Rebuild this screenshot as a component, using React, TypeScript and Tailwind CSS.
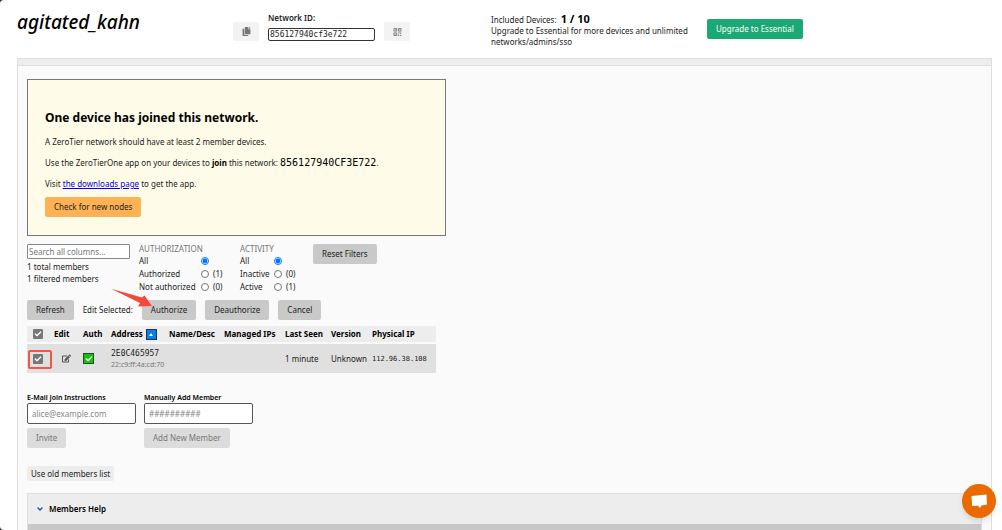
import type { ReactNode } from "react";
import { FaCopy, FaEdit } from "react-icons/fa";
import { Check, ChevronDown } from "lucide-react";

type ActionButtonProps = {
  children: ReactNode;
  className?: string;
  disabled?: boolean;
};

const ActionButton = ({
  children,
  className = "bg-[#c9c9c9] text-[#222]",
  disabled,
}: ActionButtonProps) => (
  <button
    type="button"
    disabled={disabled}
    className={`h-5 shrink-0 whitespace-nowrap rounded-xs px-[9px] ${className}`}
  >
    {children}
  </button>
);

const QrIcon = () => (
  <svg viewBox="0 0 9 9" className="h-2 w-[9px]" fill="none" stroke="#777">
    <path d="M.5.5h3v3h-3zM5.5.5h3v3h-3zM.5 5.5h3v3h-3zM5 5.5h2M8 5v2M5.5 7v2M7 8.5h2M1.500 2h1M6.500 2h1M1.500 7h1" />
  </svg>
);

type FilterOption = { label: string; count?: number };

const FilterGroup = ({
  title,
  name,
  options,
  columns,
}: {
  title: string;
  name: string;
  options: FilterOption[];
  columns: string;
}) => (
  <fieldset>
    <legend className="h-[10px] leading-[10px] text-[#777]">{title}</legend>
    {options.map((option, i) => (
      <label
        key={option.label}
        className={`grid h-[13px] items-center whitespace-nowrap leading-[10px] ${columns}`}
      >
        <span>{option.label}</span>
        <input
          type="radio"
          name={name}
          defaultChecked={i === 0}
          className="h-2 w-2 accent-[#0075ff]"
        />
        {option.count !== undefined && <span>({option.count})</span>}
      </label>
    ))}
  </fieldset>
);

const Checkbox = ({ label }: { label: string }) => (
  <span className="relative block h-[10px] w-[10px]">
    <input
      type="checkbox"
      aria-label={label}
      defaultChecked
      className="block h-[10px] w-[10px] appearance-none rounded-[1px] bg-[#777]"
    />
    <Check
      className="pointer-events-none absolute inset-0 h-[10px] w-[10px] p-px text-white"
      strokeWidth={4}
    />
  </span>
);

const Header = () => (
  <header className="flex h-[58px] items-start pl-[17px]">
    <h1 className="w-[216px] shrink-0 pt-2 text-[19px] font-medium italic leading-7 text-black">
      agitated_kahn
    </h1>
    <div className="flex shrink-0 items-end gap-[9px] pt-3">
      <button
        type="button"
        aria-label="Copy network ID"
        className="flex h-[19px] w-[26px] items-center justify-center rounded-xs bg-[#f3f3f3] text-[#777]"
      >
        <FaCopy size={9} />
      </button>
      <div>
        <label
          htmlFor="network-id"
          className="block h-4 font-semibold leading-3"
        >
          Network ID:
        </label>
        <input
          id="network-id"
          readOnly
          defaultValue="856127940cf3e722"
          className="block h-[13px] w-[107px] rounded-xs border border-[#333] bg-white px-px font-['DejaVu_Sans_Mono',monospace] text-[8px]"
        />
      </div>
      <button
        type="button"
        aria-label="Show QR code"
        className="flex h-[19px] w-[26px] items-center justify-center rounded-xs bg-[#f3f3f3]"
      >
        <QrIcon />
      </button>
    </div>
    <div className="ml-[81px] flex gap-3 pt-[13px]">
      <div className="w-[204px] leading-[11px]">
        <p>
          Included Devices:{" "}
          <b className="ml-[2px] text-[11px] text-black">1 / 10</b>
        </p>
        <p>Upgrade to Essential for more devices and unlimited networks/admins/sso</p>
      </div>
      <ActionButton className="mt-[6px] bg-[#1aa974] text-white">
        Upgrade to Essential
      </ActionButton>
    </div>
  </header>
);

const JoinNotice = () => (
  <section className="h-[157px] w-[419px] border border-[#777] bg-[#fffbe9] px-[17px] pt-[29px]">
    <h2 className="text-[12px] font-bold leading-[18px] text-black">
      One device has joined this network.
    </h2>
    <p className="mt-2 leading-[13px]">
      A ZeroTier network should have at least 2 member devices.
    </p>
    <p className="mt-2 leading-[13px]">
      Use the ZeroTierOne app on your devices to{" "}
      <b className="text-black">join</b> this network:{" "}
      <code className="font-['DejaVu_Sans_Mono',monospace] text-[10px] text-black">
        856127940CF3E722
      </code>
      .
    </p>
    <p className="mt-2 leading-[13px]">
      Visit{" "}
      <a href="#downloads" className="text-[#0000ee] underline">
        the downloads page
      </a>{" "}
      to get the app.
    </p>
    <ActionButton className="mt-[7px] bg-[#ffb254] text-[#222]">
      Check for new nodes
    </ActionButton>
  </section>
);

const Filters = () => (
  <div className="mt-2 flex h-[50px] items-start">
    <div className="w-28 shrink-0 leading-3">
      <input
        type="text"
        aria-label="Search all columns"
        placeholder="Search all columns..."
        className="mb-[2px] block h-[15px] w-[103px] rounded-[1px] border border-[#888] bg-white px-px placeholder:text-[#777]"
      />
      <p>1 total members</p>
      <p>1 filtered members</p>
    </div>
    <div className="w-[101px] shrink-0">
      <FilterGroup
        title="AUTHORIZATION"
        name="authorization"
        columns="grid-cols-[62px_12px_auto]"
        options={[
          { label: "All" },
          { label: "Authorized", count: 1 },
          { label: "Not authorized", count: 0 },
        ]}
      />
    </div>
    <div className="w-[73px] shrink-0">
      <FilterGroup
        title="ACTIVITY"
        name="activity"
        columns="grid-cols-[34px_12px_auto]"
        options={[
          { label: "All" },
          { label: "Inactive", count: 0 },
          { label: "Active", count: 1 },
        ]}
      />
    </div>
    <ActionButton>Reset Filters</ActionButton>
  </div>
);

const EditSelected = () => (
  <div className="relative mt-[6px] flex items-center gap-[9px]">
    <ActionButton>Refresh</ActionButton>
    <span>Edit Selected:</span>
    <ActionButton>Authorize</ActionButton>
    <ActionButton>Deauthorize</ActionButton>
    <ActionButton>Cancel</ActionButton>
    <svg
      viewBox="0 0 42 20"
      className="pointer-events-none absolute -top-3 left-[84px] h-5 w-[42px]"
      fill="#f24a3d"
    >
      <path d="M0 .8 31 9.5 33.5 7.5 41 18 27 18.5 29 15Z" />
    </svg>
  </div>
);

const MembersTable = () => (
  <table className="mt-[6px] w-[409px] table-fixed text-left">
    <colgroup>
      <col className="w-[27px]" />
      <col className="w-[29px]" />
      <col className="w-7" />
      <col className="w-[58px]" />
      <col className="w-[55px]" />
      <col className="w-[61px]" />
      <col className="w-[46px]" />
      <col className="w-[41px]" />
      <col className="w-16" />
    </colgroup>
    <thead className="whitespace-nowrap border-b-2 border-[#fafafa] bg-[#ededed] font-bold text-black">
      <tr className="h-[17px]">
        <th className="pl-[6px]">
          <Checkbox label="Select all members" />
        </th>
        <th>Edit</th>
        <th>Auth</th>
        <th>
          <span className="flex items-center gap-[3px]">
            Address
            <button
              type="button"
              aria-label="Sort by address"
              className="flex h-[11px] w-[11px] shrink-0 items-center justify-center border border-[#234] bg-[#0a7fe8]"
            >
              <svg viewBox="0 0 5 4" className="h-[3px] w-1" fill="white">
                <path d="M2.5 0 5 4H0z" />
              </svg>
            </button>
          </span>
        </th>
        <th>Name/Desc</th>
        <th>Managed IPs</th>
        <th>Last Seen</th>
        <th>Version</th>
        <th>Physical IP</th>
      </tr>
    </thead>
    <tbody className="whitespace-nowrap bg-[#e0e0e0]">
      <tr className="h-[30px]">
        <td className="relative pl-[6px]">
          <Checkbox label="Select 2E0C465957" />
          <span className="pointer-events-none absolute left-px top-[6px] h-[19px] w-6 rounded-xs border-2 border-[#f2554b]" />
        </td>
        <td className="pl-2">
          <button type="button" aria-label="Edit member" className="block">
            <FaEdit size={9} className="text-[#555]" />
          </button>
        </td>
        <td>
          <button
            type="button"
            aria-label="Authorized"
            className="flex h-[11px] w-[11px] items-center justify-center border border-[#244a24] bg-[#0fc40f]"
          >
            <Check className="h-2 w-2 text-white" strokeWidth={4} />
          </button>
        </td>
        <td>
          <div className="font-['DejaVu_Sans_Mono',monospace] leading-[11px]">
            2E0C465957
          </div>
          <div className="text-[7px] leading-[11px] text-[#777]">
            22:c9:ff:4a:cd:70
          </div>
        </td>
        <td />
        <td />
        <td>1 minute</td>
        <td>Unknown</td>
        <td className="font-['DejaVu_Sans_Mono',monospace] text-[7px]">
          112.96.38.108
        </td>
      </tr>
    </tbody>
  </table>
);

const AddMembers = () => (
  <div className="mt-[19px] flex gap-2">
    <div>
      <label
        htmlFor="email"
        className="block text-[7px] font-semibold leading-[11px] text-black"
      >
        E-Mail Join Instructions
      </label>
      <input
        id="email"
        type="email"
        placeholder="alice@example.com"
        className="mb-1 block h-[21px] w-[109px] rounded-xs border border-[#555] bg-white px-1 placeholder:text-[#888]"
      />
      <ActionButton disabled className="bg-[#dcdcdc] text-[#777]">
        Invite
      </ActionButton>
    </div>
    <div>
      <label
        htmlFor="member"
        className="block text-[7px] font-semibold leading-[11px] text-black"
      >
        Manually Add Member
      </label>
      <input
        id="member"
        type="text"
        placeholder="##########"
        className="mb-1 block h-[21px] w-[109px] rounded-xs border border-[#555] bg-white px-1 placeholder:text-[#888]"
      />
      <ActionButton disabled className="bg-[#dcdcdc] text-[#777]">
        Add New Member
      </ActionButton>
    </div>
  </div>
);

const App = () => {
  return (
    <div className="bg-[#333]">
      <div className="flex min-h-screen flex-col rounded-l-sm bg-white font-['Noto_Sans','Open_Sans',sans-serif] text-[8px] leading-3 text-[#222]">
        <Header />
        <main className="ml-[17px] mr-[10px] flex flex-1 flex-col border border-b-0 border-[#dedede] bg-[#fafafa]">
          <div className="h-[7px] border-b border-[#dedede] bg-[#ededed]" />
          <div className="flex flex-1 flex-col px-[9px] pt-[13px]">
            <JoinNotice />
            <Filters />
            <EditSelected />
            <MembersTable />
            <AddMembers />
            <button
              type="button"
              className="mt-[18px] h-[15px] self-start rounded-xs bg-[#ededed] px-1"
            >
              Use old members list
            </button>
            <section className="mt-3 flex flex-1 flex-col border border-b-0 border-[#dedede]">
              <h2>
                <button
                  type="button"
                  className="flex h-[30px] w-full items-center gap-[5px] bg-[#ededed] pl-2 font-semibold text-black"
                >
                  <ChevronDown
                    className="h-2 w-2 text-[#0b4bb3]"
                    strokeWidth={4}
                  />
                  Members Help
                </button>
              </h2>
              <div className="min-h-1 flex-1 bg-[#c8c8c8]" />
            </section>
          </div>
        </main>
      </div>
      <button
        type="button"
        aria-label="Open chat"
        className="fixed bottom-3 right-[6px] flex h-[34px] w-[34px] items-center justify-center rounded-full bg-[#eb6a00] shadow-md"
      >
        <svg viewBox="0 0 17 15" className="h-[15px] w-[17px]" fill="white">
          <path d="M.5 2 15.5.5 16 10.5 10.500 11.500 9 14 7 11.700 1.200 12Z" />
        </svg>
      </button>
    </div>
  );
};

export default App;
